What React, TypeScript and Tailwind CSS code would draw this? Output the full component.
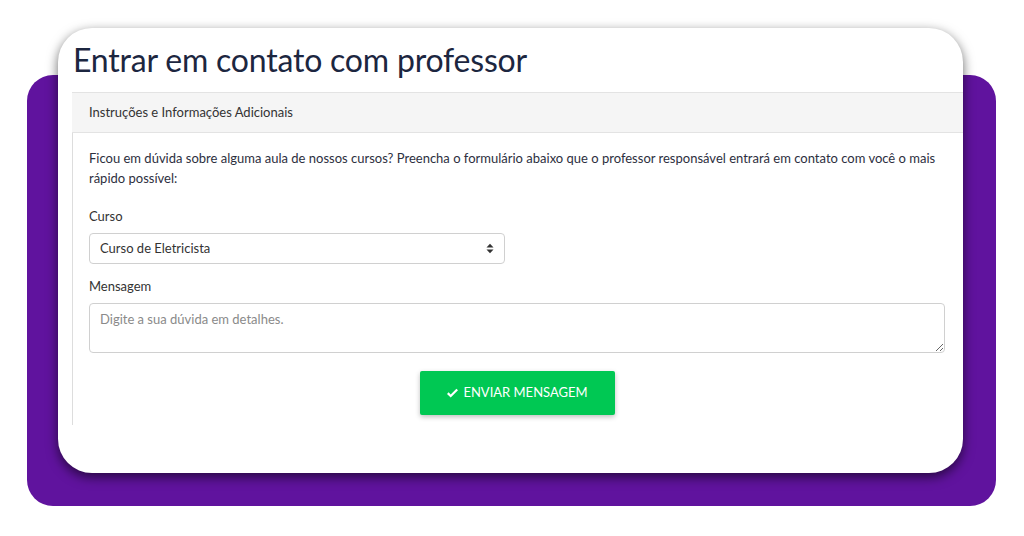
import React from "react";

function SortCaret() {
  return (
    <svg width="8" height="11" viewBox="0 0 8 11" className="text-[#333]">
      <path d="M0.5 4.5 L4 0.8 L7.5 4.5 Z" fill="currentColor" />
      <path d="M0.5 6.5 L4 10.2 L7.5 6.5 Z" fill="currentColor" />
    </svg>
  );
}

function CheckMark() {
  return (
    <svg width="13" height="11" viewBox="0 0 13 11">
      <path d="M1 6 L4.7 9.6 L12 2.2 L10.4 0.7 L4.7 6.4 L2.6 4.3 Z" fill="white" />
    </svg>
  );
}

export default function App() {
  return (
    <div className="w-[1024px] h-[536px] bg-white overflow-hidden font-['Lato',sans-serif]">
      <div className="relative w-[1024px] h-[536px] pt-[28px] pl-[58px]">
        {/* purple backdrop behind the card */}
        <div className="absolute left-[27px] top-[75px] w-[969px] h-[431px] rounded-[26px] bg-[#60139e]" />

        <div className="relative w-[905px] h-[445px] rounded-[34px] bg-white overflow-hidden shadow-[0_4px_12px_rgba(0,0,0,0.6)] flex flex-col">
          <h1 className="pl-[15px] pt-[12px] h-[64px] text-[32px] leading-[40px] text-[#1c2640] tracking-[-0.2px]">
            Entrar em contato com professor
          </h1>

          <div className="ml-[14px] w-[892px] flex flex-col">
            <div className="h-[41px] bg-[#f5f5f5] border-y border-[#e3e3e3] pl-[17px] flex items-center text-[13px] text-[#333]">
              Instruções e Informações Adicionais
            </div>

            <div className="border-l border-[#dddddd] pl-[16px] pr-[17px] pt-[15px] pb-[10px] text-[#2d2f3e]">
              <p className="text-[13px] leading-[20px] w-[856px]">
                Ficou em dúvida sobre alguma aula de nossos cursos? Preencha o formulário abaixo que o professor responsável entrará em contato com você o mais rápido possível:
              </p>

              <label className="block mt-[19px] text-[13px] leading-[18px] text-[#333]">Curso</label>
              <div className="mt-[8px] w-[416px] h-[31px] border border-[#d0d0d0] rounded-[4px] flex items-center justify-between pl-[10px] pr-[10px] text-[13px] text-[#333]">
                <span>Curso de Eletricista</span>
                <SortCaret />
              </div>

              <label className="block mt-[13px] text-[13px] leading-[18px] text-[#333]">Mensagem</label>
              <textarea
                className="mt-[8px] block w-[856px] h-[50px] border border-[#d0d0d0] rounded-[4px] px-[10px] py-[6px] text-[13px] text-[#333] placeholder:text-[#8a8a8a] outline-none"
                placeholder="Digite a sua dúvida em detalhes."
              />

              <div className="mt-[18px] flex justify-center w-[856px]">
                <button
                  type="button"
                  className="w-[195px] h-[44px] bg-[#00c853] text-white text-[13px] uppercase flex items-center justify-center gap-[4px] rounded-[2px] shadow-[0_2px_5px_rgba(0,0,0,0.25)]"
                >
                  <CheckMark />
                  Enviar mensagem
                </button>
              </div>
            </div>
          </div>
        </div>
      </div>
    </div>
  );
}
